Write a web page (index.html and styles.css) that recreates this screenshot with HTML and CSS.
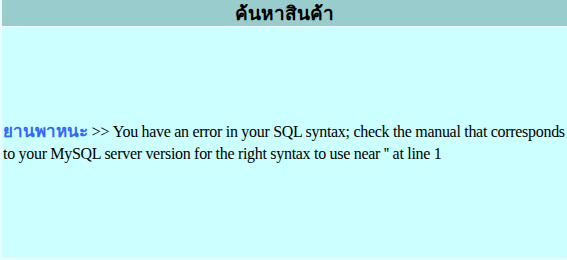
FILE: index.html
```html
<!DOCTYPE html>
<html lang="th">
<head>
    <meta charset="UTF-8">
    <title>ค้นหาสินค้า</title>
    <link rel="stylesheet" href="styles.css">
</head>
<body>
    <div class="wrap">
        <div class="head">ค้นหาสินค้า</div>
        <div class="result">
            <p><span class="cat">ยานพาหนะ</span> &gt;&gt; You have an error in your SQL syntax; check the manual that corresponds to your MySQL server version for the right syntax to use near '' at line 1</p>
        </div>
    </div>
</body>
</html>
```

FILE: styles.css
```css
body {
    margin: 0;
    background: #eefaff;
    font-family: "Liberation Serif", serif;
    font-size: 16px;
    letter-spacing: -0.3px;
}
.wrap {
    display: flex;
    flex-direction: column;
    gap: 1px;
    padding: 0 0 2px 2px;
    height: 260px;
    box-sizing: border-box;
}
.head {
    height: 26px;
    background: #99cccc;
    display: flex;
    align-items: center;
    justify-content: center;
    font-family: Tahoma, "DejaVu Sans", sans-serif;
    font-weight: bold;
    font-size: 19px;
    letter-spacing: 0;
    color: #000;
}
.result {
    flex: 1;
    background: #ccffff;
    display: flex;
    align-items: center;
    padding: 0 1px;
}
.result p {
    margin: 0;
    line-height: 22px;
}
.cat {
    color: #3366ff;
    font-weight: bold;
    font-family: Tahoma, "DejaVu Sans", sans-serif;
    font-size: 17px;
    letter-spacing: 0;
}
```
